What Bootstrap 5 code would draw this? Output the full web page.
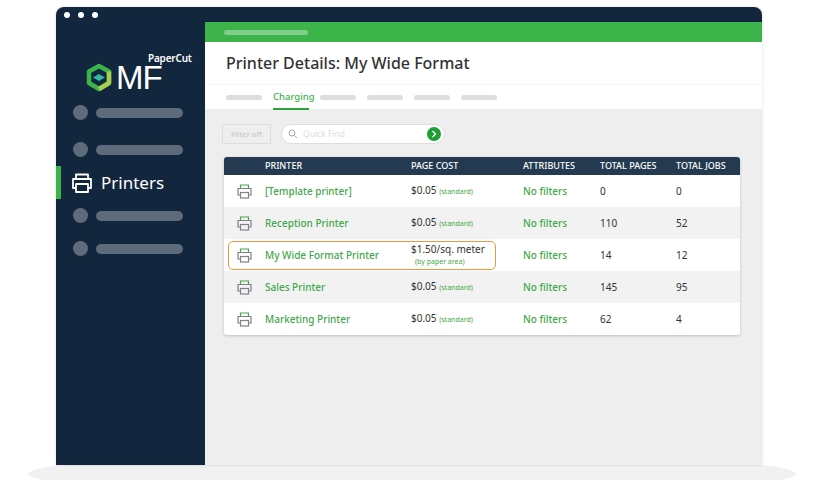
<!DOCTYPE html>
<html lang="en">
<head>
    <meta charset="UTF-8">
    <meta name="viewport" content="width=device-width, initial-scale=1.0">
    <title>Printer Details</title>
    <link href="https://cdn.jsdelivr.net/npm/bootstrap@5.3.1/dist/css/bootstrap.min.css" rel="stylesheet">
    <style>
        html, body {
            height: 480px;
            overflow: hidden;
        }

        body {
            background-color: #fff;
            color: #333;
            font-family: "Noto Sans", "Open Sans", sans-serif;
            position: relative;
        }

        .floor {
            position: absolute;
            left: 28px;
            top: 452px;
            width: 768px;
            height: 44px;
            border-radius: 50%;
            background-color: #f1f1f1;
        }

        .app-window {
            position: relative;
            width: 706px;
            height: 458px;
            margin: 7px 0 0 56px;
            background-color: #12263d;
            border-radius: 8px 8px 0 0;
            overflow: hidden;
            box-shadow: 0 0 3px rgba(0, 0, 0, .15);
        }

        .title-bar {
            height: 15px;
            padding-left: 8px;
        }

        .title-bar span {
            width: 6px;
            height: 6px;
            border-radius: 50%;
            background-color: #fff;
        }

        .side-nav {
            width: 149px;
            flex: none;
        }

        .logo-box {
            height: 70px;
            padding: 18px 0 0 30px;
            color: #fff;
        }

        .logo-small {
            font-size: 10px;
            font-weight: 600;
            line-height: 10px;
            margin-left: 32px;
            letter-spacing: -.2px;
        }

        .logo-big {
            font-family: "Liberation Sans", sans-serif;
            font-size: 33px;
            line-height: 29px;
            letter-spacing: -1px;
        }

        .side-item {
            height: 33px;
            padding-left: 17px;
        }

        .side-dot {
            width: 15px;
            height: 15px;
            border-radius: 50%;
            background-color: #5e6b7a;
        }

        .side-line {
            width: 87px;
            height: 10px;
            border-radius: 5px;
            background-color: #5e6b7a;
        }

        .side-active {
            height: 33px;
            padding-left: 10px;
            border-left: 5px solid #3cb44a;
            color: #fff;
            font-size: 17px;
        }

        .main-pane {
            background-color: #eee;
        }

        .green-bar {
            height: 20px;
            padding-left: 19px;
            background-color: #3cb44a;
        }

        .green-bar div {
            width: 84px;
            height: 5px;
            border-radius: 3px;
            background-color: #7fcf88;
        }

        .head-title {
            height: 42px;
            padding-left: 21px;
            font-size: 16px;
            font-weight: 500;
            color: #333;
        }

        .tab-row {
            height: 25px;
            padding-left: 21px;
            gap: 11px;
            border-top: 1px solid #f6f6f6;
        }

        .tab-line {
            width: 36px;
            height: 5px;
            border-radius: 3px;
            background-color: #ddd;
        }

        .tab-on {
            width: 36px;
            height: 25px;
            line-height: 24px;
            font-size: 9.5px;
            font-weight: 500;
            color: #3cb44a;
            border-bottom: 2px solid #2fa13c;
            white-space: nowrap;
        }

        .tool-row {
            padding: 15px 0 0 17px;
            gap: 10px;
        }

        .filter-btn {
            width: 49px;
            height: 20px;
            border: 1px solid #ddd;
            font-size: 7.5px;
            font-weight: 600;
            line-height: 18px;
            text-align: center;
            color: #ccc;
            background-color: #eee;
        }

        .find-box {
            width: 164px;
            height: 20px;
            border: 1px solid #ddd;
            border-radius: 10px;
            background-color: #fff;
            padding: 0 1px 0 6px;
            font-size: 8.5px;
            color: #ddd;
            gap: 5px;
        }

        .find-go {
            width: 14px;
            height: 14px;
            margin-left: auto;
            margin-right: 2px;
        }

        .table-wrap {
            position: relative;
            width: 516px;
            margin: 13px 0 0 19px;
            background-color: #fff;
            border-radius: 3px;
            box-shadow: 0 1px 3px rgba(0, 0, 0, .2);
            overflow: visible;
        }

        .printer-table {
            table-layout: fixed;
            margin: 0;
            font-size: 10px;
        }

        .printer-table th {
            height: 18px;
            padding: 0;
            background-color: #243a50;
            color: #fff;
            font-size: 9px;
            font-weight: 500;
            vertical-align: middle;
            border: 0;
        }

        .printer-table th:first-child {
            border-top-left-radius: 3px;
        }

        .printer-table th:last-child {
            border-top-right-radius: 3px;
        }

        .printer-table td {
            height: 32px;
            padding: 0;
            vertical-align: middle;
            border: 0;
            color: #333;
            line-height: 11px;
        }

        .printer-table tr.shade td {
            background-color: #f2f2f2;
        }

        .printer-table td.row-ico {
            padding-left: 13px;
        }

        .printer-table td.green-txt {
            color: #3fa94b;
            font-weight: 500;
        }

        .cost-note {
            font-size: 7px;
            color: #3fa94b;
        }

        .row-ico svg {
            display: block;
        }

        .pick-box {
            position: absolute;
            left: 4px;
            top: 84px;
            width: 268px;
            height: 29px;
            border: 1.5px solid #e79a3c;
            border-radius: 5px;
            pointer-events: none;
        }
    </style>
</head>
<body>

<div class="floor"></div>

<div class="app-window">
    <div class="title-bar d-flex align-items-center gap-2">
        <span></span><span></span><span></span>
    </div>
    <div class="d-flex" style="height: 443px">
        <!-- Sidebar -->
        <div class="side-nav">
            <div class="logo-box d-flex align-items-end">
                <svg width="26" height="29" viewBox="0 0 26 29" class="me-1 mb-0 flex-none">
                    <path d="M13 3 L23 8.5 V20 L13 26 L3 20 V8.5 Z" fill="none" stroke="#3cb44a" stroke-width="4.5" stroke-linejoin="round"/>
                    <path d="M13 26 L23 20 V8.5" fill="none" stroke="#a5cf4c" stroke-width="4.5" stroke-linejoin="round"/>
                    <path d="M13 11 L19 14.5 L13 18 L7 14.5 Z" fill="#35b5a6"/>
                </svg>
                <div>
                    <div class="logo-small">PaperCut</div>
                    <div class="logo-big">MF</div>
                </div>
            </div>
            <div class="side-item d-flex align-items-center gap-2 mt-1"><div class="side-dot"></div><div class="side-line"></div></div>
            <div class="side-item d-flex align-items-center gap-2 mt-1"><div class="side-dot"></div><div class="side-line"></div></div>
            <div class="side-active d-flex align-items-center gap-2">
                <svg width="22" height="22" viewBox="0 0 22 22" fill="none" stroke="#fff" stroke-width="1.8" stroke-linejoin="round">
                    <path d="M5 7 V2.5 H17 V7"/>
                    <path d="M5 16 H2 V7 H20 V16 H17"/>
                    <rect x="5" y="12" width="12" height="8"/>
                </svg>
                <span>Printers</span>
            </div>
            <div class="side-item d-flex align-items-center gap-2"><div class="side-dot"></div><div class="side-line"></div></div>
            <div class="side-item d-flex align-items-center gap-2"><div class="side-dot"></div><div class="side-line"></div></div>
        </div>

        <!-- Main Content -->
        <div class="main-pane flex-grow-1">
            <div class="green-bar d-flex align-items-center"><div></div></div>
            <div class="bg-white">
                <div class="head-title d-flex align-items-center">Printer Details: My Wide Format</div>
                <div class="tab-row d-flex align-items-center">
                    <div class="tab-line"></div>
                    <div class="tab-on">Charging</div>
                    <div class="tab-line"></div>
                    <div class="tab-line"></div>
                    <div class="tab-line"></div>
                    <div class="tab-line"></div>
                </div>
            </div>

            <div class="tool-row d-flex">
                <div class="filter-btn">Filter off</div>
                <div class="find-box d-flex align-items-center">
                    <svg width="10" height="10" viewBox="0 0 10 10" fill="none" stroke="#aaa" stroke-width="1"><circle cx="4" cy="4" r="3"/><path d="M6.3 6.3 L9 9"/></svg>
                    <span>Quick Find</span>
                    <svg class="find-go" viewBox="0 0 14 14"><circle cx="7" cy="7" r="7" fill="#1f9e35"/><path d="M5.5 4 L8.5 7 L5.5 10" fill="none" stroke="#fff" stroke-width="1.3"/></svg>
                </div>
            </div>

            <div class="table-wrap">
                <table class="table printer-table">
                    <colgroup>
                        <col style="width: 41px"><col style="width: 146px"><col style="width: 112px"><col style="width: 77px"><col style="width: 76px"><col>
                    </colgroup>
                    <thead>
                        <tr><th></th><th>PRINTER</th><th>PAGE COST</th><th>ATTRIBUTES</th><th>TOTAL PAGES</th><th>TOTAL JOBS</th></tr>
                    </thead>
                    <tbody id="printerRows"></tbody>
                </table>
                <div class="pick-box"></div>
            </div>
        </div>
    </div>
</div>

<script src="https://cdn.jsdelivr.net/npm/bootstrap@5.3.1/dist/js/bootstrap.bundle.min.js"></script>
<script>
    const printers = [
        { name: '[Template printer]', cost: '$0.05', note: '(standard)', pages: 0, jobs: 0 },
        { name: 'Reception Printer', cost: '$0.05', note: '(standard)', pages: 110, jobs: 52 },
        { name: 'My Wide Format Printer', cost: '$1.50/sq. meter', note: '(by paper area)', pages: 14, jobs: 12, wide: true },
        { name: 'Sales Printer', cost: '$0.05', note: '(standard)', pages: 145, jobs: 95 },
        { name: 'Marketing Printer', cost: '$0.05', note: '(standard)', pages: 62, jobs: 4 }
    ];

    const rowIcon = `<svg width="15" height="15" viewBox="0 0 15 15" fill="none" stroke-width="1.2">
        <path d="M3.5 4.5 V1 H11.5 V4.5" stroke="#3fa94b"/>
        <path d="M3.5 11 H1 V4.5 H14 V11 H11.5" stroke="#7c8288"/>
        <rect x="3.5" y="8.5" width="8" height="5.5" stroke="#7c8288"/>
    </svg>`;

    document.getElementById('printerRows').innerHTML = printers.map((p, i) => `
        <tr class="${i % 2 ? 'shade' : ''}">
            <td class="row-ico">${rowIcon}</td>
            <td class="green-txt">${p.name}</td>
            <td>${p.wide ? `${p.cost}<br><span class="cost-note ms-1">${p.note}</span>` : `${p.cost} <span class="cost-note">${p.note}</span>`}</td>
            <td class="green-txt">No filters</td>
            <td>${p.pages}</td>
            <td>${p.jobs}</td>
        </tr>`).join('');
</script>
</body>
</html>
